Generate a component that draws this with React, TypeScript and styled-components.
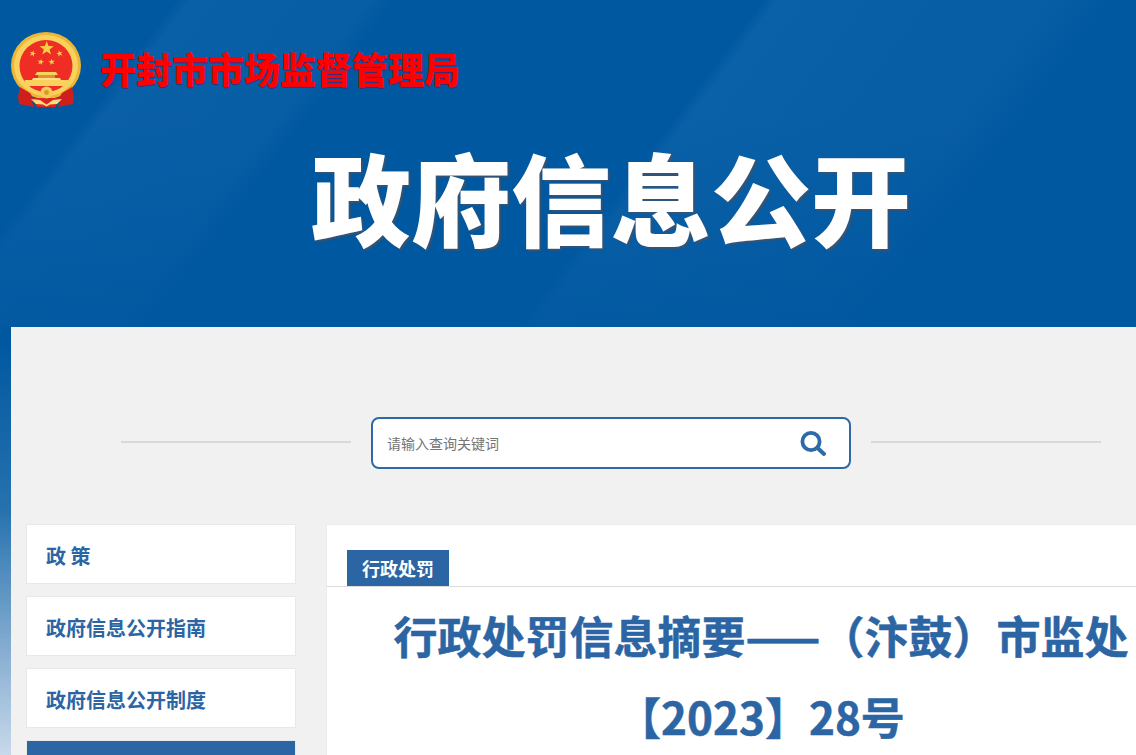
import { createGlobalStyle } from 'styled-components'
import styled from 'styled-components'

const GlobalStyle = createGlobalStyle`
  html, body {
    margin: 0;
    padding: 0;
    height: 100%;
    overflow: hidden;
  }
  body {
    font-family: "Noto Sans CJK SC", "Noto Sans", sans-serif;
  }
`

const Page = styled.div`
  width: 1222px;
  min-height: 755px;
  background: linear-gradient(
    180deg,
    #0058a0 0,
    #0058a0 340px,
    #2672ae 510px,
    #7fa9cf 640px,
    #c8d9ea 755px
  );
`

const Header = styled.header`
  height: 327px;
  box-sizing: border-box;
  padding-top: 32px;
  background:
    linear-gradient(180deg, rgba(0, 88, 160, 0) 0, rgba(0, 88, 160, 0) 35%, rgba(0, 88, 160, 0.75) 100%),
    linear-gradient(
      127deg,
      #0058a0 0%,
      #0058a0 12%,
      #0a60a7 13%,
      #085ea5 25%,
      #0058a0 27%,
      #0058a0 52%,
      #0a61a8 53%,
      #075da4 72%,
      #0058a0 76%,
      #0058a0 100%
    );
`

const Brand = styled.div`
  display: flex;
  align-items: center;
  gap: 19px;
  padding-left: 11px;
  height: 76px;
`

const Emblem = styled.svg`
  display: block;
  flex: none;
  width: 70px;
  height: 76px;
`

const BrandName = styled.div`
  margin-top: -5px;
  font-size: 36px;
  line-height: 76px;
  font-weight: 900;
  color: #ff0000;
  text-shadow: 1px 1px 0 #3a2a78;
`

const PortalTitle = styled.h1`
  margin: 33px 0 0;
  font-size: 100px;
  line-height: 110px;
  font-weight: 900;
  text-align: center;
  color: #fff;
  text-shadow: 2px 2px 1px rgba(70, 80, 100, 0.75);
`

const Panel = styled.main`
  margin-left: 11px;
  width: 1200px;
  box-sizing: border-box;
  padding: 90px 15px 40px;
  background: #f1f1f1;
`

const SearchRow = styled.div`
  display: flex;
  align-items: center;
  justify-content: center;
  gap: 20px;
  margin-bottom: 55px;
`

const Rule = styled.span`
  display: block;
  width: 230px;
  height: 2px;
  margin-top: -2px;
  background: #d8d8d8;
`

const SearchBox = styled.form`
  display: flex;
  align-items: center;
  box-sizing: border-box;
  width: 480px;
  height: 52px;
  padding: 0 22px 0 14px;
  background: #fff;
  border: 2px solid #2e6aa8;
  border-radius: 8px;
`

const SearchInput = styled.input`
  flex: 1;
  min-width: 0;
  border: 0;
  outline: 0;
  padding: 0;
  background: transparent;
  font-family: inherit;
  font-size: 14px;
  color: #555;

  &::placeholder {
    color: #757575;
    opacity: 1;
  }
`

const SearchButton = styled.button`
  display: flex;
  border: 0;
  padding: 0;
  background: none;
  color: #2e6aa8;
`

const Columns = styled.div`
  display: flex;
  gap: 30px;
  align-items: flex-start;
`

const Sidebar = styled.nav`
  flex: none;
  width: 270px;
  display: flex;
  flex-direction: column;
  gap: 12px;
`

const SideItem = styled.a<{ $active?: boolean }>`
  display: flex;
  align-items: center;
  box-sizing: border-box;
  height: 60px;
  padding: 2px 0 0 19px;
  font-size: 20px;
  font-weight: 700;
  color: ${(p) => (p.$active ? '#fff' : '#2c65a3')};
  background: ${(p) => (p.$active ? '#2c65a3' : '#fff')};
  border: 1px solid #e8e8e8;
`

const Article = styled.article`
  flex: 1;
  min-height: 500px;
  background: #fff;
  border: 1px solid #ececec;
  border-bottom: 0;
`

const TabBar = styled.div`
  display: flex;
  padding: 25px 0 0 20px;
  border-bottom: 1px solid #dcdcdc;
`

const Tab = styled.span`
  display: block;
  padding: 0 15px;
  font-size: 18px;
  line-height: 36px;
  font-weight: 700;
  color: #fff;
  background: #2c65a3;
`

const ArticleTitle = styled.h2`
  margin: 8px 0 0;
  padding: 0 20px;
  font-size: 44px;
  line-height: 81px;
  font-weight: 700;
  text-align: center;
  color: #2c65a3;
  -webkit-text-stroke: 0.5px #2c65a3;
`

function StarShape({ x, y, r, rotate = 0 }: { x: number; y: number; r: number; rotate?: number }) {
  const points = Array.from({ length: 10 }, (_, i) => {
    const radius = i % 2 === 0 ? r : r * 0.4
    const angle = ((-90 + i * 36 + rotate) * Math.PI) / 180
    return `${(x + radius * Math.cos(angle)).toFixed(2)},${(y + radius * Math.sin(angle)).toFixed(2)}`
  }).join(' ')
  return <polygon points={points} fill="#f6cf45" />
}

function NationalEmblem() {
  return (
    <Emblem viewBox="0 0 70 76" aria-hidden="true">
      <ellipse cx="35" cy="33.5" rx="35" ry="33.5" fill="#eeb636" />
      <ellipse cx="35" cy="33.5" rx="32" ry="30.5" fill="#f8d25c" />
      <ellipse cx="35" cy="34" rx="26.5" ry="26" fill="#ee2d25" />
      <StarShape x={35.7} y={16.5} r={7.5} />
      <StarShape x={21.7} y={21.5} r={3.4} rotate={15} />
      <StarShape x={48.6} y={21.5} r={3.4} rotate={-15} />
      <StarShape x={29.7} y={30} r={3.4} rotate={10} />
      <StarShape x={40.7} y={30} r={3.4} rotate={-10} />
      <path d="M26 40h19l2 3H24z" fill="#f8d25c" />
      <path d="M27 43h17v3H27z" fill="#d9952c" />
      <path d="M22 46h27l1 2H21z" fill="#fbe08a" />
      <path d="M14 48h43l2 6H12z" fill="#f8d25c" />
      <path d="M9 55l10 6 5 8-3 1 2 5-15-3-1-7z" fill="#cf1f1c" />
      <path d="M61 55l-10 6-5 8 3 1-2 5 15-3 1-7z" fill="#cf1f1c" />
      <path d="M21 66h28l-5 9H26z" fill="#dd2424" />
      <circle cx="35.500" cy="60.500" r="6" fill="#f5cc55" />
      <circle cx="35.500" cy="60.500" r="2.400" fill="#d39a2c" />
      <path d="M20 67l9 1 6.500 4.500 6.500-4.500 9-1-5 5-7 .5-3.500 2-3.500-2-7-.5z" fill="#fbdc7a" />
    </Emblem>
  )
}

export default function App() {
  return (
    <Page>
      <GlobalStyle />
      <Header>
        <Brand>
          <NationalEmblem />
          <BrandName>开封市市场监督管理局</BrandName>
        </Brand>
        <PortalTitle>政府信息公开</PortalTitle>
      </Header>
      <Panel>
        <SearchRow>
          <Rule />
          <SearchBox onSubmit={(e) => e.preventDefault()}>
            <SearchInput placeholder="请输入查询关键词" />
            <SearchButton type="submit" aria-label="搜索">
              <svg width="28" height="28" viewBox="0 0 28 28" fill="none" stroke="currentColor">
                <circle cx="12" cy="12.5" r="8.6" strokeWidth="3.8" />
                <path d="M18.6 19l6.400 6" strokeWidth="4" strokeLinecap="round" />
              </svg>
            </SearchButton>
          </SearchBox>
          <Rule />
        </SearchRow>
        <Columns>
          <Sidebar>
            <SideItem>政 策</SideItem>
            <SideItem>政府信息公开指南</SideItem>
            <SideItem>政府信息公开制度</SideItem>
            <SideItem $active />
          </Sidebar>
          <Article>
            <TabBar>
              <Tab>行政处罚</Tab>
            </TabBar>
            <ArticleTitle>行政处罚信息摘要——（汴鼓）市监处【2023】28号</ArticleTitle>
          </Article>
        </Columns>
      </Panel>
    </Page>
  )
}
